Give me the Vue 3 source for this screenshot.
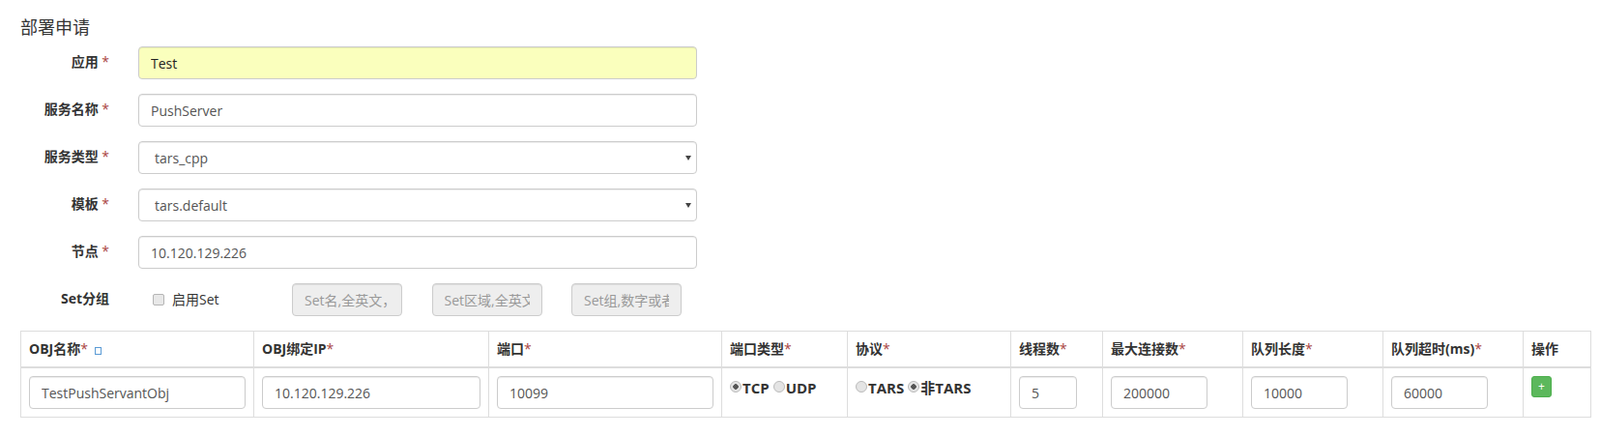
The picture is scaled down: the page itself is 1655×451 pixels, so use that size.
<template>
  <div class="page">
    <h4 class="title">部署申请</h4>
    <form class="form" @submit.prevent>
      <div class="row">
        <label class="label">应用 <span class="req">*</span></label>
        <input class="control wide autofill" type="text" v-model="form.app" />
      </div>
      <div class="row">
        <label class="label">服务名称 <span class="req">*</span></label>
        <input class="control wide" type="text" v-model="form.name" />
      </div>
      <div class="row">
        <label class="label">服务类型 <span class="req">*</span></label>
        <div class="select wide">
          <select class="control" v-model="form.type">
            <option>tars_cpp</option>
            <option>tars_java</option>
          </select>
        </div>
      </div>
      <div class="row">
        <label class="label">模板 <span class="req">*</span></label>
        <div class="select wide">
          <select class="control" v-model="form.template">
            <option>tars.default</option>
          </select>
        </div>
      </div>
      <div class="row">
        <label class="label">节点 <span class="req">*</span></label>
        <input class="control wide" type="text" v-model="form.node" />
      </div>
      <div class="row">
        <label class="label">Set分组</label>
        <label class="enable"><input type="checkbox" />启用Set</label>
        <div class="set-inputs">
          <input class="control" type="text" disabled placeholder="Set名,全英文，长度不限" />
          <input class="control" type="text" disabled placeholder="Set区域,全英文，长度不限" />
          <input class="control" type="text" disabled placeholder="Set组,数字或者*" />
        </div>
      </div>
    </form>

    <table class="table">
      <colgroup>
        <col v-for="w in colWidths" :key="w.id" :style="{ width: w.px + 'px' }" />
      </colgroup>
      <thead>
        <tr>
          <th>OBJ名称<span class="req">*</span> <i class="missing"></i></th>
          <th>OBJ绑定IP<span class="req">*</span></th>
          <th>端口<span class="req">*</span></th>
          <th>端口类型<span class="req">*</span></th>
          <th>协议<span class="req">*</span></th>
          <th>线程数<span class="req">*</span></th>
          <th>最大连接数<span class="req">*</span></th>
          <th>队列长度<span class="req">*</span></th>
          <th>队列超时(ms)<span class="req">*</span></th>
          <th>操作</th>
        </tr>
      </thead>
      <tbody>
        <tr>
          <td><input class="control" type="text" value="TestPushServantObj" /></td>
          <td><input class="control" type="text" value="10.120.129.226" /></td>
          <td><input class="control" type="text" value="10099" /></td>
          <td class="choices">
            <label><input type="radio" name="port" checked />TCP</label>
            <label><input type="radio" name="port" />UDP</label>
          </td>
          <td class="choices">
            <label><input type="radio" name="proto" />TARS</label>
            <label><input type="radio" name="proto" checked />非TARS</label>
          </td>
          <td><input class="control w60" type="text" value="5" /></td>
          <td><input class="control w100" type="text" value="200000" /></td>
          <td><input class="control w100" type="text" value="10000" /></td>
          <td><input class="control w100" type="text" value="60000" /></td>
          <td><button class="add" type="button">+</button></td>
        </tr>
      </tbody>
    </table>
  </div>
</template>

<script setup>
import { reactive } from 'vue';

const form = reactive({
  app: 'Test',
  name: 'PushServer',
  type: 'tars_cpp',
  template: 'tars.default',
  node: '10.120.129.226'
});

const colWidths = [241, 243, 241, 130, 169, 95, 145, 145, 145, 70].map((px, id) => ({ id, px }));
</script>

<style>
body {
  background: #fff;
}
</style>

<style scoped>
.page {
  width: 1655px;
  height: 451px;
  overflow: hidden;
  padding: 18px 10px 0 21px;
  box-sizing: border-box;
  font-family: "Open Sans", "Noto Sans CJK SC", sans-serif;
  font-size: 14px;
  line-height: 20px;
  color: #333;
}

.title {
  margin: 0 0 9px;
  font-size: 18px;
  font-weight: 400;
  line-height: 21px;
}

.row {
  display: flex;
  align-items: flex-start;
  margin-bottom: 15px;
  height: 34px;
}

.label {
  width: 92px;
  margin-right: 30px;
  padding-top: 6px;
  text-align: right;
  font-weight: 700;
  flex: none;
}

.req {
  color: #a94442;
  font-weight: 400;
}

.control {
  display: block;
  width: 100%;
  height: 34px;
  padding: 6px 12px;
  box-sizing: border-box;
  border: 1px solid #ccc;
  border-radius: 4px;
  background: #fff;
  box-shadow: inset 0 1px 1px rgba(0, 0, 0, 0.075);
  font: inherit;
  color: #555;
  outline: none;
}

.wide {
  width: 578px;
  flex: none;
}

.autofill {
  background: #faffbd;
  color: #222;
}

.select {
  position: relative;
}

.select select {
  appearance: none;
  padding: 7px 16px 6px;
}

.select::after {
  content: "";
  position: absolute;
  top: 15px;
  right: 6px;
  border-top: 5px solid #444;
  border-left: 3.5px solid transparent;
  border-right: 3.5px solid transparent;
  pointer-events: none;
}

.control:disabled {
  background: #eee;
}

.control::placeholder {
  color: #999;
}

.enable {
  display: flex;
  align-items: center;
  height: 20px;
  margin: 7px 0 0 15px;
  width: 144px;
  flex: none;
}

.enable input {
  appearance: none;
  width: 12px;
  height: 12px;
  margin: 0 8px 0 0;
  border: 1px solid #b5b5b5;
  border-radius: 2px;
  background: #e8e8e8;
  box-sizing: border-box;
}

.set-inputs {
  display: flex;
  gap: 30.5px;
}

.set-inputs .control {
  width: 114px;
}

.table {
  width: 1624px;
  table-layout: fixed;
  border-collapse: collapse;
}

.table th,
.table td {
  border: 1px solid #ddd;
  padding: 8px;
  text-align: left;
  vertical-align: top;
  box-sizing: border-box;
}

.table th {
  border-bottom: 2px solid #ddd;
  height: 37px;
  font-weight: 700;
}

.table td {
  height: 50px;
}

.table td.choices {
  padding-top: 10px;
  font-size: 15px;
  font-weight: 700;
  white-space: nowrap;
}

.missing {
  display: inline-block;
  width: 7px;
  height: 8px;
  margin-left: 3px;
  border: 1px solid #5b9bd5;
  box-sizing: border-box;
  vertical-align: -1px;
}

.w60 {
  width: 60px;
}

.w100 {
  width: 100px;
}

.choices label {
  margin-right: 4px;
}

.choices input {
  appearance: none;
  display: inline-block;
  width: 12px;
  height: 12px;
  margin: 0 1px 0 0;
  border-radius: 50%;
  border: 1px solid #bbb;
  background: #e4e4e4;
  box-sizing: border-box;
  vertical-align: 1px;
}

.choices input:checked {
  background: radial-gradient(circle, #555 0 2.5px, #e4e4e4 3px);
}

.add {
  display: block;
  width: 21px;
  height: 22px;
  padding: 0;
  border: 1px solid #4cae4c;
  border-radius: 3px;
  background: #5cb85c;
  color: #fff;
  font: inherit;
  font-size: 12px;
  line-height: 18px;
}
</style>
